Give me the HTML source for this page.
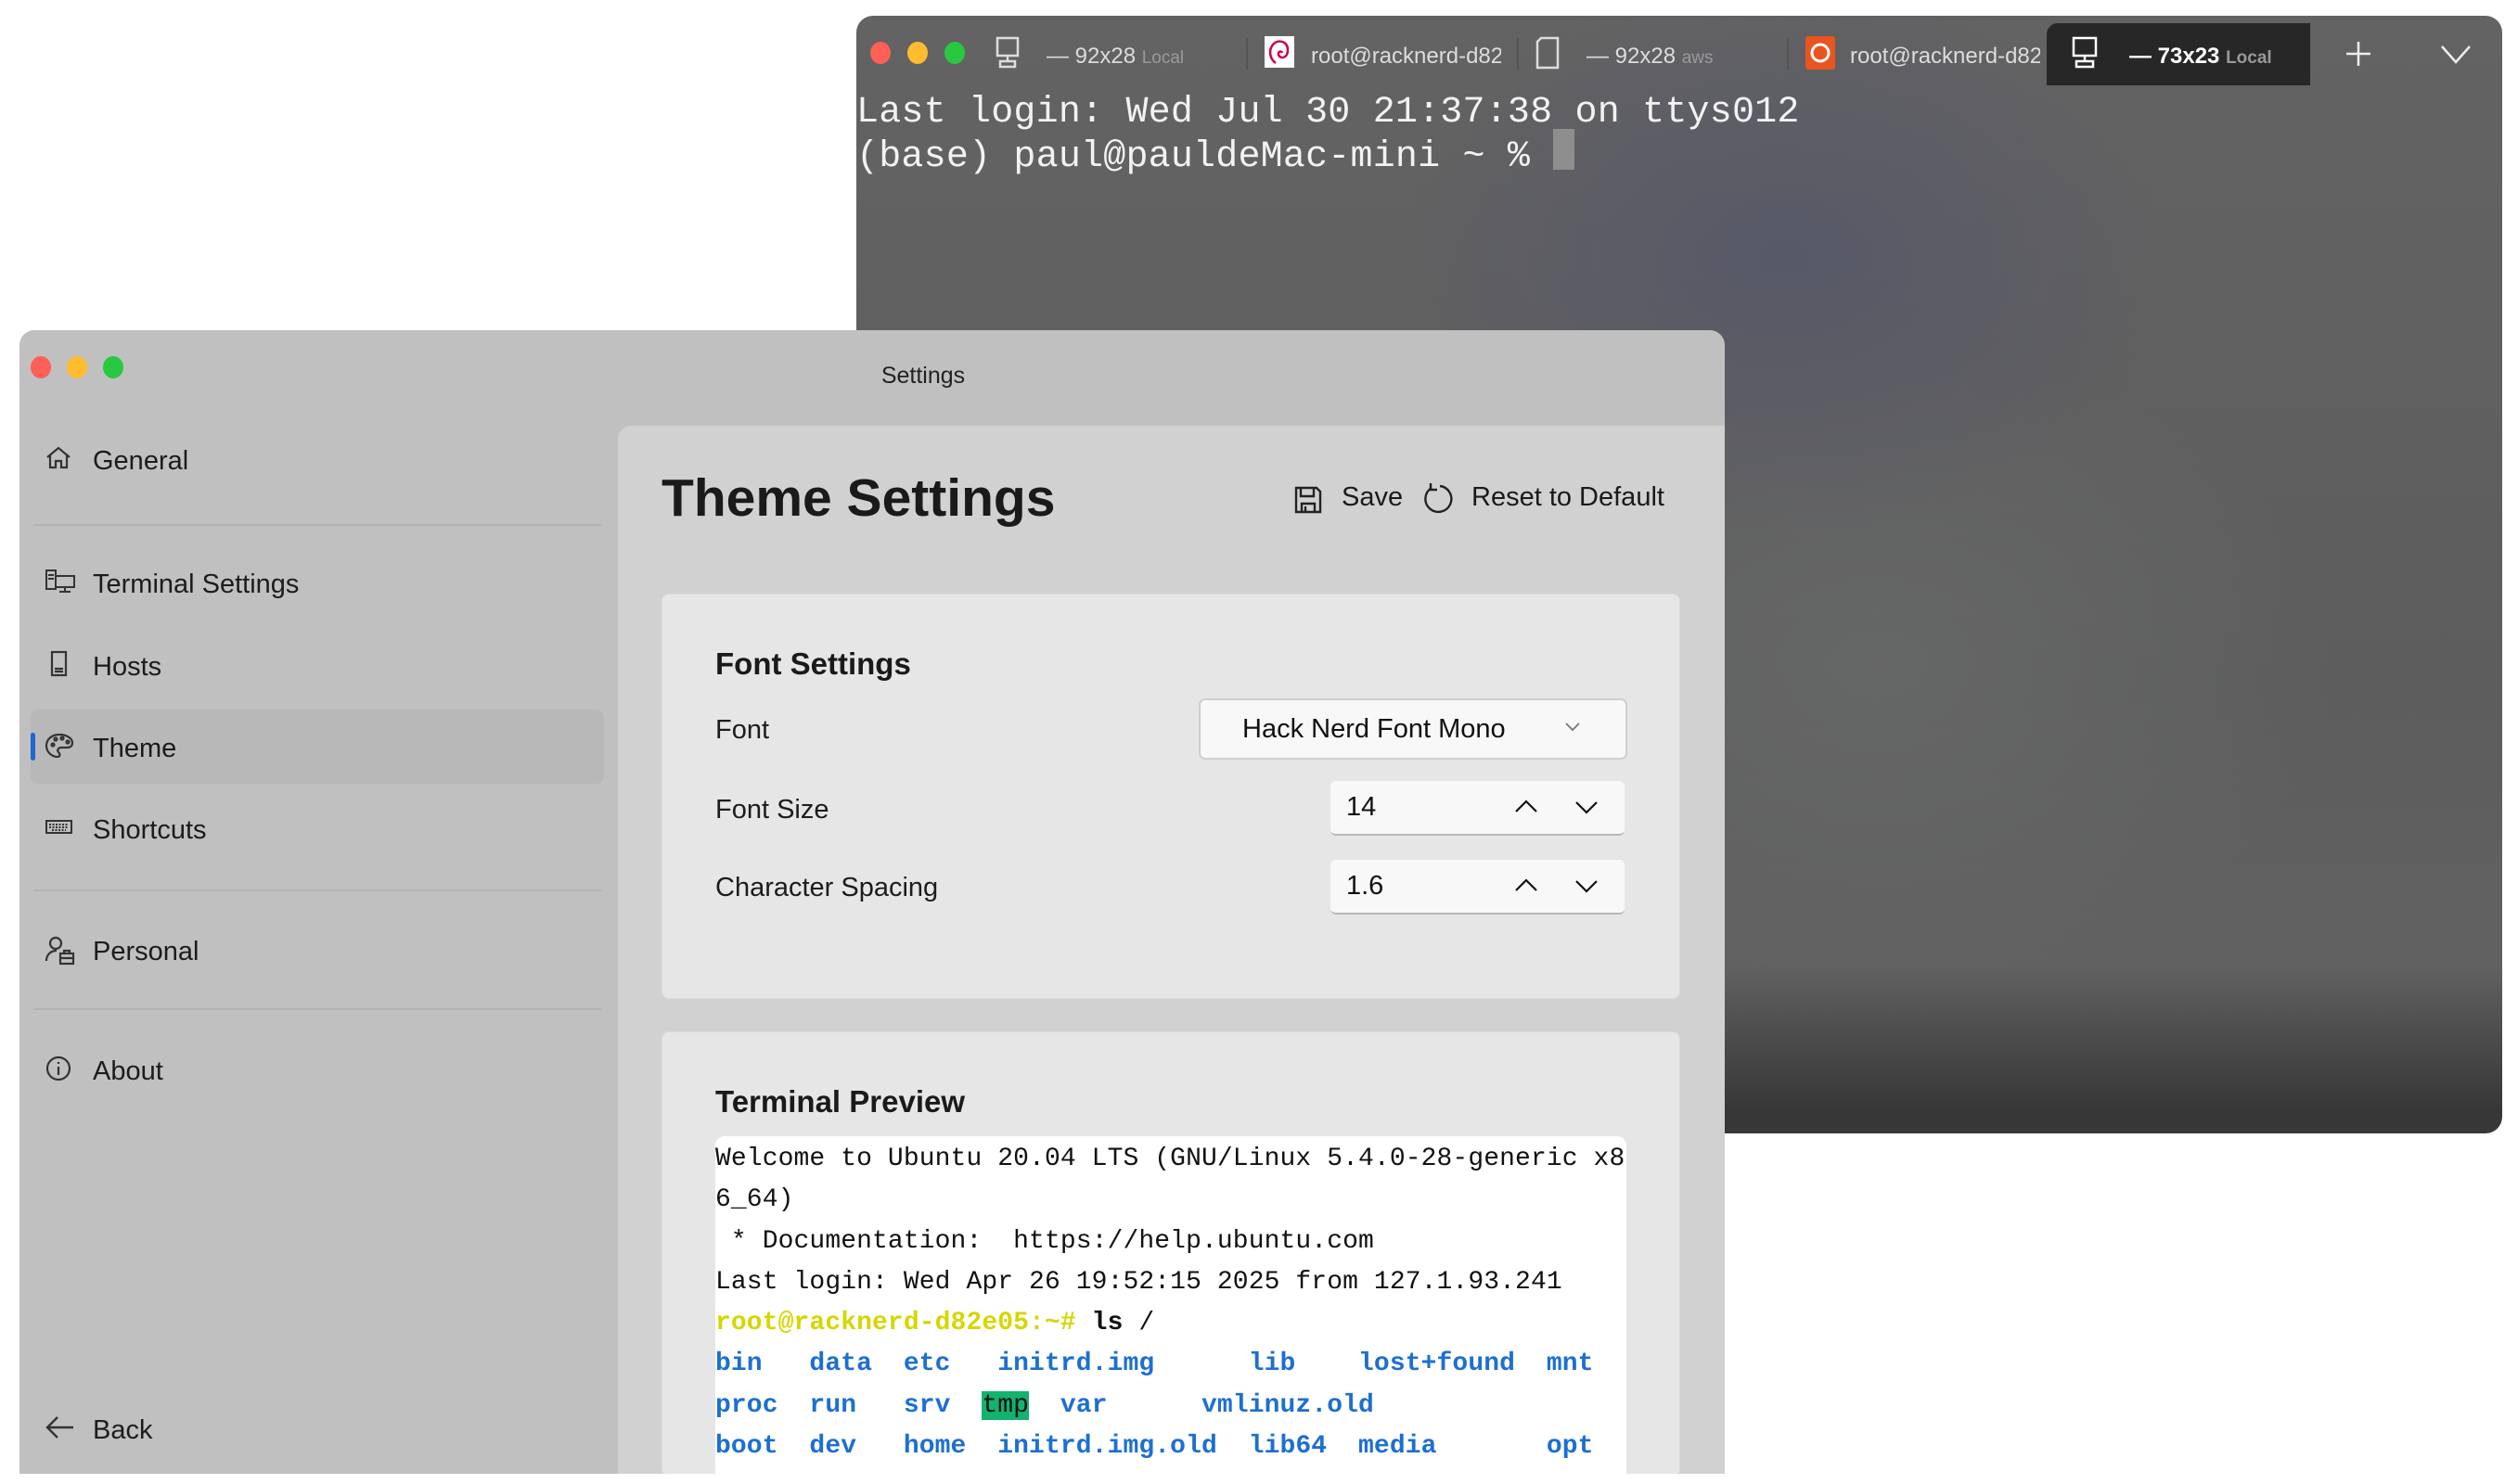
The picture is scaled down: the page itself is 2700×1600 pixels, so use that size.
<!DOCTYPE html>
<html><head><meta charset="utf-8">
<style>
*{margin:0;padding:0;box-sizing:border-box}
html,body{overflow:hidden}
body{width:2700px;height:1600px;background:#fff;position:relative;overflow:hidden;font-family:"Liberation Sans",sans-serif}
.abs{position:absolute}
#term{left:923px;top:17px;width:1774px;height:1205px;border-radius:18px;overflow:hidden;
background:radial-gradient(ellipse 420px 300px at 1000px 260px,rgba(80,82,110,.55),rgba(0,0,0,0)),radial-gradient(ellipse 500px 350px at 1100px 700px,rgba(110,112,112,.5),rgba(0,0,0,0)),linear-gradient(#636363,#5d5d5d 60%,#616161 85%,#373737 98%)}
.tl{position:absolute;width:22px;height:24px;border-radius:50%}
.tab{position:absolute;top:30px;font-size:24px;color:#dcdcdc;white-space:nowrap}
.tab small{font-size:19px;color:#9a9a9a}
.mono{font-family:"Liberation Mono",monospace}
#set{left:21px;top:356px;width:1838px;height:1233px;border-radius:16px 16px 0 0;overflow:hidden;background:#c0c0c0}
.nav{position:absolute;left:79px;font-size:29px;color:#1c1c1c}
.ic{position:absolute;left:-52px;top:-2px}
.sep{position:absolute;left:15px;width:612px;height:2px;background:#b3b3b3}
#main{position:absolute;left:645px;top:103px;width:1200px;height:1130px;background:#d1d1d1;border-radius:14px 0 0 0;overflow:hidden}
.card{position:absolute;left:47px;width:1098px;background:#e6e6e6;border-radius:8px;border:1px solid #dadada}
.lbl{position:absolute;left:57px;font-size:29px;color:#1c1c1c}
.spin{position:absolute;left:720px;width:317px;height:59px;background:#f8f8f8;border-radius:6px;border-bottom:2px solid #b8b8b8;font-size:29px;color:#111}
#pv{position:absolute;left:57px;top:112px;width:982px;height:370px;background:#fff;border-radius:10px 10px 0 0;font-size:28px;line-height:44.3px;color:#111;white-space:pre;letter-spacing:.1px;padding-top:3px;overflow:hidden}
.b{color:#1d6fd1;font-weight:bold}
.y{color:#d6d600;font-weight:bold}
</style></head><body>

<div id="term" class="abs">
  <div class="tl" style="left:15px;top:28px;background:#fe5f57"></div>
  <div class="tl" style="left:55px;top:28px;background:#febc2e"></div>
  <div class="tl" style="left:95px;top:28px;background:#28c840"></div>
  <svg class="abs" style="left:150px;top:22px" width="26" height="36" viewBox="0 0 26 36" fill="none" stroke="#ddd" stroke-width="2.5"><rect x="2" y="2" width="22" height="19"/><path d="M13 21v5M5 27h16v6H5z"/></svg>
  <div class="tab" style="left:205px">— 92x28 <small>Local</small></div>
  <div class="abs" style="left:420px;top:24px;width:2px;height:34px;background:#555"></div>
  <div class="abs" style="left:440px;top:22px;width:32px;height:34px;background:#fff"><svg width="32" height="34" viewBox="0 0 32 34" fill="none" stroke="#c7004e" stroke-width="2.5"><path d="M10 8c6-5 15-2 15 7s-8 10-10 5c-1-3 3-5 4-2M10 8c-6 6-5 16 2 21"/></svg></div>
  <div class="tab" style="left:490px;width:205px;overflow:hidden">root@racknerd-d82e05</div>
  <div class="abs" style="left:712px;top:24px;width:2px;height:34px;background:#555"></div>
  <svg class="abs" style="left:732px;top:22px" width="26" height="36" viewBox="0 0 26 36" fill="none" stroke="#ddd" stroke-width="2.5"><path d="M6 2h18v32H2V6z"/></svg>
  <div class="tab" style="left:787px">— 92x28 <small>aws</small></div>
  <div class="abs" style="left:1003px;top:24px;width:2px;height:34px;background:#555"></div>
  <div class="abs" style="left:1023px;top:22px;width:32px;height:36px;background:#e95420;border-radius:3px"><svg width="32" height="36" viewBox="0 0 32 36" fill="none" stroke="#fff" stroke-width="3"><circle cx="16" cy="18" r="9"/></svg></div>
  <div class="tab" style="left:1071px;width:205px;overflow:hidden">root@racknerd-d82e05</div>
  <div class="abs" style="left:1283px;top:8px;width:284px;height:67px;background:#272727;border-radius:12px 0 0 0"></div>
  <svg class="abs" style="left:1310px;top:22px" width="28" height="36" viewBox="0 0 28 36" fill="none" stroke="#fff" stroke-width="2.5"><rect x="2" y="2" width="24" height="19"/><path d="M14 21v5M5 27h18v6H5z"/></svg>
  <div class="tab" style="left:1372px;color:#fff;font-weight:bold">— 73x23 <small style="color:#999">Local</small></div>
  <svg class="abs" style="left:1604px;top:26px" width="30" height="30" viewBox="0 0 30 30" stroke="#eee" stroke-width="2.5"><path d="M15 2v26M2 15h26"/></svg>
  <svg class="abs" style="left:1707px;top:30px" width="34" height="24" viewBox="0 0 34 24" fill="none" stroke="#eee" stroke-width="2.5"><path d="M2 3l15 17L32 3"/></svg>
  <div class="abs mono" style="left:0;top:81px;font-size:40px;line-height:48px;color:#f2f2f2;white-space:pre;letter-spacing:.2px">Last login: Wed Jul 30 21:37:38 on ttys012
(base) paul@pauldeMac-mini ~ % </div>
  <div class="abs" style="left:751px;top:122px;width:23px;height:44px;background:#8e8e8e"></div>
</div>

<div id="set" class="abs">
  <div class="tl" style="left:12px;top:28px;background:#fe5f57"></div>
  <div class="tl" style="left:51px;top:28px;background:#febc2e"></div>
  <div class="tl" style="left:90px;top:28px;background:#28c840"></div>
  <div class="abs" style="left:0;width:1948px;top:35px;text-align:center;font-size:25px;color:#222">Settings</div>

  <div class="nav" style="top:125px"><svg class="ic" width="30" height="30" viewBox="0 0 30 30" fill="none" stroke="#333" stroke-width="2.2"><path d="M3 14L15 4l12 10M6 12v13h6v-7h6v7h6V12"/></svg>General</div>
  <div class="sep" style="top:209px"></div>
  <div class="nav" style="top:258px"><svg class="ic" width="34" height="30" viewBox="0 0 34 30" fill="none" stroke="#333" stroke-width="2"><rect x="2" y="3" width="10" height="20"/><path d="M4 8h6M4 12h6"/><rect x="12" y="9" width="20" height="12"/><path d="M22 21v4M16 26h12"/></svg>Terminal Settings</div>
  <div class="nav" style="top:347px"><svg class="ic" width="30" height="30" viewBox="0 0 30 30" fill="none" stroke="#333" stroke-width="2.2"><rect x="8" y="2" width="15" height="25"/><path d="M11 20h9M11 23h9"/></svg>Hosts</div>
  <div class="abs" style="left:12px;top:409px;width:618px;height:80px;background:#b8b8b8;border-radius:8px"></div>
  <div class="abs" style="left:12px;top:434px;width:5px;height:30px;background:#1f66d1;border-radius:3px"></div>
  <div class="nav" style="top:435px"><svg class="ic" width="32" height="30" viewBox="0 0 32 30" fill="none" stroke="#333" stroke-width="2.2"><path d="M16 3C8 3 2 8 2 15s6 12 12 12c3 0 3-3 1-5s0-5 3-5h6c4 0 6-2 6-5C30 7 24 3 16 3z"/><circle cx="9" cy="14" r="1.5"/><circle cx="12" cy="8" r="1.5"/><circle cx="19" cy="7" r="1.5"/><circle cx="25" cy="11" r="1.5"/></svg>Theme</div>
  <div class="nav" style="top:523px"><svg class="ic" width="32" height="30" viewBox="0 0 32 30" fill="none" stroke="#333" stroke-width="2"><rect x="2" y="8" width="27" height="13"/><path d="M5 12h21M5 15h21M8 18h15" stroke-dasharray="2 1.5"/></svg>Shortcuts</div>
  <div class="sep" style="top:603px"></div>
  <div class="nav" style="top:654px"><svg class="ic" width="34" height="34" viewBox="0 0 34 34" fill="none" stroke="#333" stroke-width="2.2"><circle cx="12" cy="9" r="6"/><path d="M2 28c0-7 5-11 11-11"/><rect x="17" y="20" width="14" height="11"/><path d="M21 20v-3h6v3M17 25h14"/></svg>Personal</div>
  <div class="sep" style="top:731px"></div>
  <div class="nav" style="top:783px"><svg class="ic" width="32" height="32" viewBox="0 0 32 32" fill="none" stroke="#333" stroke-width="2.2"><circle cx="15" cy="15" r="12"/><path d="M15 13v9M15 8v2"/></svg>About</div>
  <div class="nav" style="top:1170px"><svg class="ic" width="34" height="30" viewBox="0 0 34 30" fill="none" stroke="#333" stroke-width="2.4"><path d="M31 15H4M14 4L3 15l11 11"/></svg>Back</div>

  <div id="main">
    <div class="abs" style="left:47px;top:45px;font-size:57px;font-weight:bold;color:#1a1a1a">Theme Settings</div>
    <svg class="abs" style="left:729px;top:65px" width="30" height="30" viewBox="0 0 30 30" fill="none" stroke="#222" stroke-width="2.4"><path d="M2 2h22l4 4v22H2z"/><path d="M7 2v9h14V2M8 28v-9h14v9M12 22v6"/></svg>
    <div class="abs" style="left:780px;top:61px;font-size:29px;color:#1a1a1a">Save</div>
    <svg class="abs" style="left:866px;top:61px" width="36" height="38" viewBox="0 0 36 38" fill="none" stroke="#222" stroke-width="2.4"><path d="M11 6a14 14 0 1 0 9-2"/><path d="M10 1v7h7"/></svg>
    <div class="abs" style="left:920px;top:61px;font-size:29px;color:#1a1a1a">Reset to Default</div>

    <div class="card" style="top:181px;height:437px">
      <div class="abs" style="left:57px;top:56px;font-size:33px;font-weight:bold;color:#1a1a1a">Font Settings</div>
      <div class="lbl" style="top:130px">Font</div>
      <div class="abs" style="left:578px;top:112px;width:462px;height:66px;background:#f8f8f8;border:2px solid #cfcfcf;border-radius:7px;font-size:29px;color:#111"><span class="abs" style="left:45px;top:15px">Hack Nerd Font Mono</span><svg class="abs" style="left:392px;top:23px" width="18" height="12" viewBox="0 0 18 12" fill="none" stroke="#777" stroke-width="1.8"><path d="M2 2l7 7 7-7"/></svg></div>
      <div class="lbl" style="top:216px">Font Size</div>
      <div class="spin" style="top:201px"><span class="abs" style="left:17px;top:12px">14</span>
        <svg class="abs" style="left:198px;top:18px" width="26" height="18" viewBox="0 0 26 18" fill="none" stroke="#111" stroke-width="2.2"><path d="M2 15L13 4l11 11"/></svg>
        <svg class="abs" style="left:263px;top:20px" width="26" height="18" viewBox="0 0 26 18" fill="none" stroke="#111" stroke-width="2.2"><path d="M2 3l11 11L24 3"/></svg></div>
      <div class="lbl" style="top:300px">Character Spacing</div>
      <div class="spin" style="top:286px"><span class="abs" style="left:17px;top:12px">1.6</span>
        <svg class="abs" style="left:198px;top:18px" width="26" height="18" viewBox="0 0 26 18" fill="none" stroke="#111" stroke-width="2.2"><path d="M2 15L13 4l11 11"/></svg>
        <svg class="abs" style="left:263px;top:20px" width="26" height="18" viewBox="0 0 26 18" fill="none" stroke="#111" stroke-width="2.2"><path d="M2 3l11 11L24 3"/></svg></div>
    </div>

    <div class="card" style="top:653px;height:480px">
      <div class="abs" style="left:57px;top:56px;font-size:33px;font-weight:bold;color:#1a1a1a">Terminal Preview</div>
      <div id="pv" class="mono">Welcome to Ubuntu 20.04 LTS (GNU/Linux 5.4.0-28-generic x8
6_64)
 * Documentation:  https://help.ubuntu.com
Last login: Wed Apr 26 19:52:15 2025 from 127.1.93.241
<span class="y">root@racknerd-d82e05:~#</span> <b>ls</b> /
<span class="b">bin   data  etc   initrd.img      lib    lost+found  mnt</span>
<span class="b">proc  run   srv  </span><span style="background:#12b26f;color:#111">tmp</span><span class="b">  var      vmlinuz.old</span>
<span class="b">boot  dev   home  initrd.img.old  lib64  media       opt</span></div>
    </div>
  </div>
</div>
</body></html>
